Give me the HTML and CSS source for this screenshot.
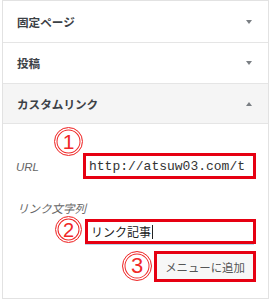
FILE: index.html
```html
<!DOCTYPE html>
<html lang="ja">
<head>
<meta charset="utf-8">
<link rel="stylesheet" href="styles.css">
</head>
<body>
<div class="panel">
  <div class="sec-head"><span class="sec-title">固定ページ</span><span class="arrow down"></span></div>
  <div class="sec-head"><span class="sec-title">投稿</span><span class="arrow down"></span></div>
  <div class="sec-head open"><span class="sec-title">カスタムリンク</span><span class="arrow up"></span></div>
  <div class="sec-body">
    <div class="url-row">
      <label class="lbl">URL</label>
      <div class="field url-field">http://atsuw03.com/t</div>
    </div>
    <div class="lbl lbl-text">リンク文字列</div>
    <div class="field text-field"><span>リンク記事</span><span class="caret"></span></div>
    <div class="btn-row"><button class="add-btn">メニューに追加</button></div>
    <span class="mark m1">1</span>
    <span class="mark m2">2</span>
    <span class="mark m3">3</span>
  </div>
</div>
</body>
</html>
```

FILE: styles.css
```css
html, body {
  margin: 0;
  padding: 0;
  background: #fff;
}
body {
  width: 269px;
  height: 300px;
  overflow: hidden;
  font-family: "Noto Sans CJK JP", "Noto Sans", sans-serif;
}
.panel {
  margin-left: 2px;
  border: 1px solid #e2e2e2;
  width: 265px;
}
.sec-head {
  height: 41px;
  border-bottom: 1px solid #e5e5e5;
  display: flex;
  align-items: center;
  justify-content: space-between;
  padding: 0 16px 0 14px;
  background: #fff;
}
.sec-head + .sec-head { height: 40px; }
.sec-head.open {
  background: #f5f5f5;
  height: 39px;
}
.sec-title {
  font-size: 11.6px;
  font-weight: 700;
  color: #3c4146;
}
.arrow {
  width: 0;
  height: 0;
  border-left: 3px solid transparent;
  border-right: 3px solid transparent;
}
.arrow.down { border-top: 4px solid #7a7e83; }
.arrow.up { border-bottom: 4px solid #7a7e83; }
.sec-body {
  position: relative;
  height: 174px;
  padding: 29px 12px 0 13px;
  box-sizing: border-box;
}
.url-row {
  display: flex;
  align-items: center;
}
.lbl {
  font-size: 11.5px;
  font-style: italic;
  color: #666;
}
.url-row .lbl {
  width: 67px;
  font-family: "Liberation Sans", "Noto Sans", sans-serif;
  font-size: 11.5px;
  padding-top: 2px;
}
.field {
  border: 3px solid #e60012;
  background: #fff;
  box-sizing: border-box;
  display: flex;
  align-items: center;
}
.url-field {
  width: 173px;
  height: 26px;
  padding-left: 3px;
  font-family: "Liberation Mono", monospace;
  font-size: 13px;
  color: #333;
  white-space: nowrap;
  overflow: hidden;
}
.lbl-text {
  margin-top: 22px;
  line-height: 14px;
  padding-left: 1px;
}
.text-field {
  margin-top: 4px;
  margin-left: auto;
  width: 171px;
  height: 25px;
  padding-left: 3px;
  font-size: 12px;
  color: #222;
  box-shadow: -1px 2px 0 -1px #b9d4ea;
}
.caret {
  display: inline-block;
  width: 1px;
  height: 14px;
  background: #222;
  margin-left: 1px;
}
.btn-row {
  display: flex;
  justify-content: flex-end;
  margin-top: 7px;
}
.add-btn {
  width: 102px;
  height: 31px;
  border: 3px solid #e60012;
  background: #f7f7f7;
  color: #555;
  font-family: "Noto Sans CJK JP", sans-serif;
  font-size: 11.4px;
  padding: 0;
  box-sizing: border-box;
}
.mark {
  position: absolute;
  box-sizing: border-box;
  border-radius: 50%;
  border: 1.5px solid #ef2b2b;
  box-shadow: inset 0 0 0 1.5px #fff, inset 0 0 0 2.5px #ef2b2b;
  background: #fff;
  color: #f02828;
  font-family: "Liberation Sans", sans-serif;
  display: flex;
  align-items: center;
  justify-content: center;
  line-height: 1;
}
.m1 { left: 51px; top: 3px; width: 29px; height: 29px; font-size: 21px; }
.m2 { left: 52px; top: 92px; width: 27px; height: 27px; font-size: 20px; }
.m3 { left: 119px; top: 127px; width: 30px; height: 30px; font-size: 22px; }
```
